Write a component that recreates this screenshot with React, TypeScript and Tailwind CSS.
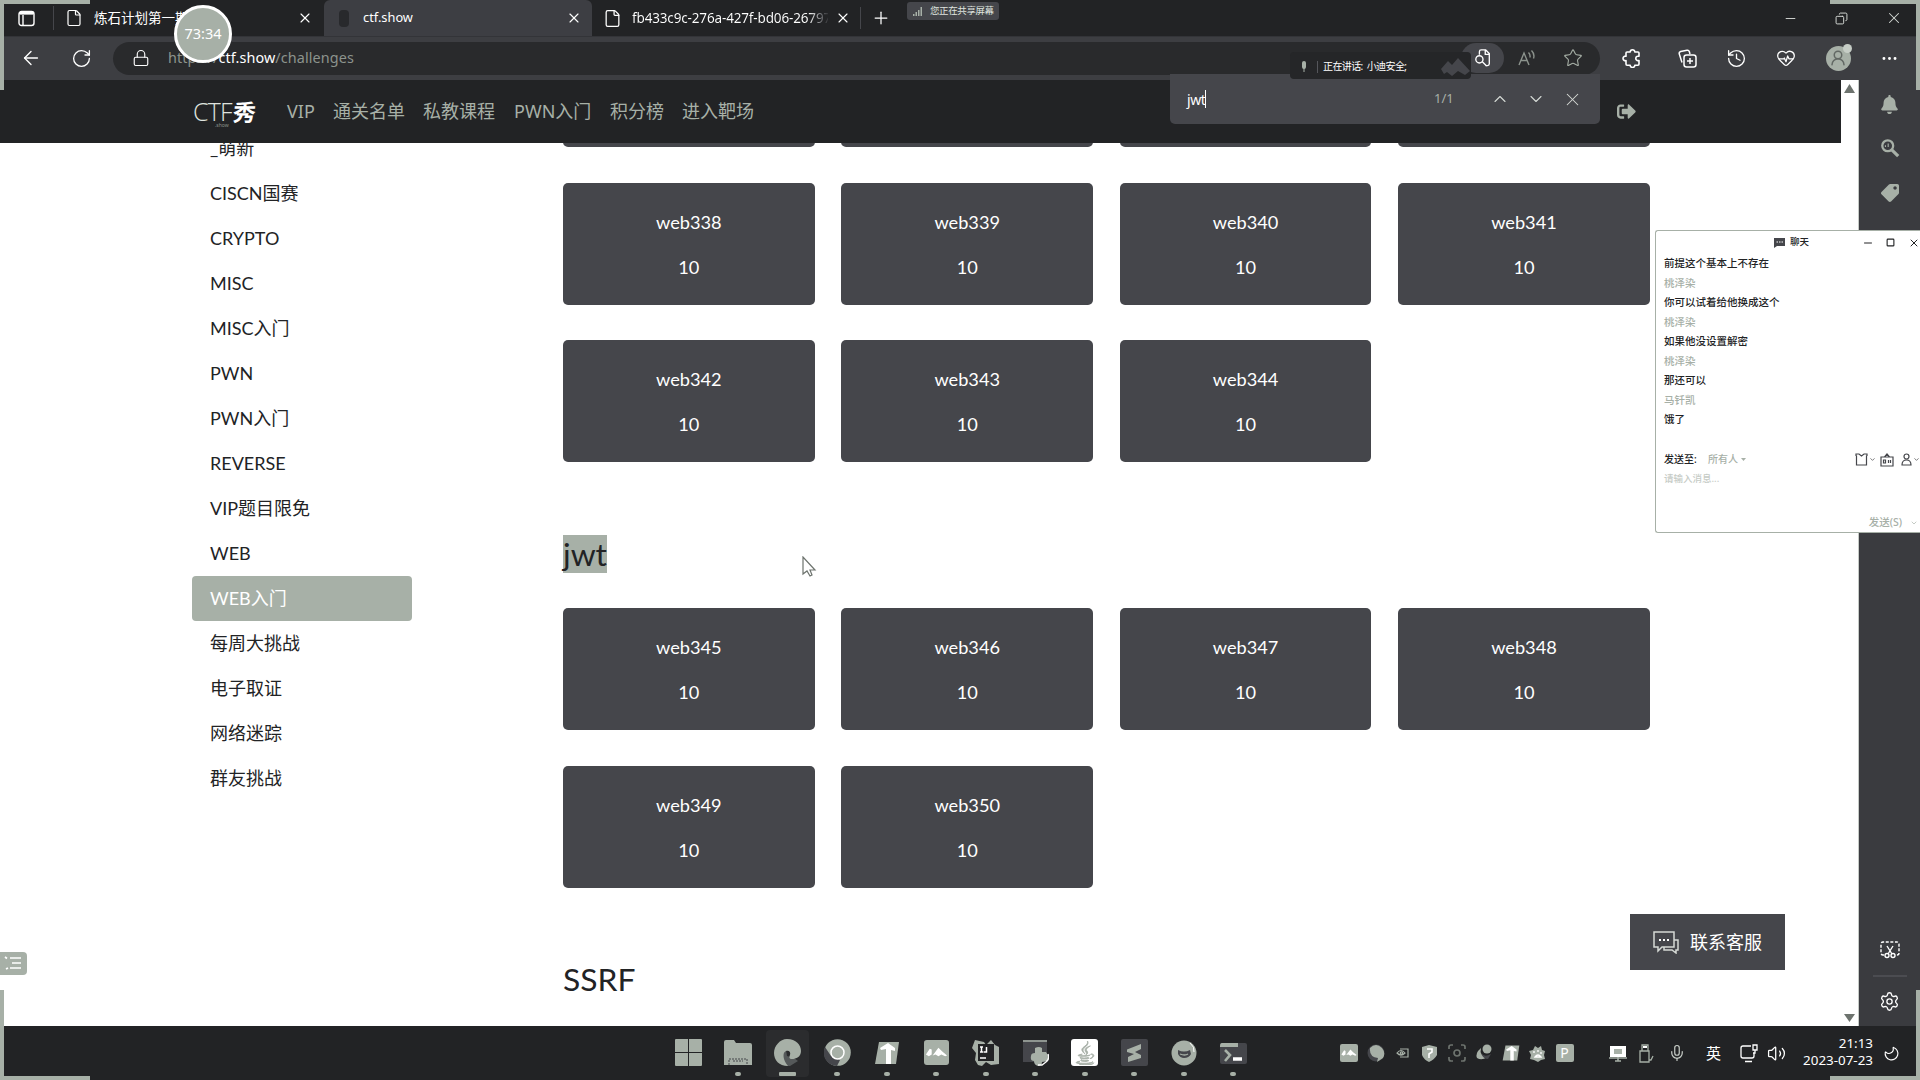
import React from "react";
import type { ReactNode } from "react";
import {
  ArrowLeft, RotateCw, Lock, X, Plus, Minus, Square, Star, History, Ellipsis, ChevronUp, ChevronDown,
  Mic, Volume2, Moon, Settings, File, Copy, UserRound, HeartPulse,
} from "lucide-react";
import { FaBell, FaSignOutAlt, FaTag, FaJava } from "react-icons/fa";

const categories = [
  "_萌新", "CISCN国赛", "CRYPTO", "MISC", "MISC入门", "PWN", "PWN入门", "REVERSE",
  "VIP题目限免", "WEB", "WEB入门", "每周大挑战", "电子取证", "网络迷踪", "群友挑战",
];
const navLinks = [
  { label: "VIP", width: "w-[46px]" },
  { label: "通关名单", width: "w-[90px]" },
  { label: "私教课程", width: "w-[91px]" },
  { label: "PWN入门", width: "w-[96px]" },
  { label: "积分榜", width: "w-[72px]" },
  { label: "进入靶场", width: "w-[90px]" },
];
const messages = [
  { text: "前提这个基本上不存在", name: false },
  { text: "桃泽染", name: true },
  { text: "你可以试着给他换成这个", name: false },
  { text: "桃泽染", name: true },
  { text: "如果他没设置解密", name: false },
  { text: "桃泽染", name: true },
  { text: "那还可以", name: false },
  { text: "马钎凯", name: true },
  { text: "饿了", name: false },
];

function Cell({ w, children }: { w: string; children?: ReactNode }) {
  return <div className={`flex shrink-0 items-center justify-center ${w}`}>{children}</div>;
}

function Card({ name }: { name: string }) {
  return (
    <div className="flex h-[122px] flex-col items-center rounded-[5px] bg-[#45464b] pt-[25px] text-[18.2px] text-white">
      <p className="leading-[28px]">{name}</p>
      <p className="mt-[17px] leading-[28px]">10</p>
    </div>
  );
}

function Grid({ items }: { items: string[] }) {
  return (
    <div className="grid grid-cols-[251.700px_251.700px_251.700px_251.700px] gap-x-[26.700px] gap-y-[35.700px]">
      {items.map((n) => <Card key={n} name={n} />)}
    </div>
  );
}

function TabBar() {
  return (
    <div className="flex h-[36px] shrink-0 items-center bg-[#222325] text-[13.5px] text-white">
      <Cell w="w-[53px]">
        <svg width="17" height="17" viewBox="0 0 17 17" fill="none" stroke="#fff" strokeWidth="1.4">
          <rect x="1" y="1.5" width="15" height="14" rx="2.5" />
          <path d="M1 3.5h15M5 5v10" /><path d="M2 3h13" strokeWidth="3" />
        </svg>
      </Cell>
      <div className="h-[24px] w-px bg-[#45464b]" />
      <Cell w="w-[40px]"><File size={18} strokeWidth={1.6} /></Cell>
      <span className="w-[192px] overflow-hidden whitespace-nowrap">炼石计划第一期</span>
      <Cell w="w-[38px]"><X size={16} strokeWidth={1.7} /></Cell>
      <div className="flex h-full w-[268px] items-center rounded-t-[6px] bg-[#3d3e43]">
        <Cell w="w-[39px]"><span className="h-[17px] w-[10px] rounded-[4px] bg-[#28292c]" /></Cell>
        <span className="w-[192px] text-[12.800px]">ctf.show</span>
        <Cell w="w-[37px]"><X size={16} strokeWidth={1.7} /></Cell>
      </div>
      <Cell w="w-[40px]"><File size={19} strokeWidth={1.6} /></Cell>
      <span className="w-[196px] overflow-hidden bg-linear-to-r from-white from-90% to-[#333438] to-100% bg-clip-text whitespace-nowrap text-transparent tracking-[-0.15px]">fb433c9c-276a-427f-bd06-26797</span>
      <Cell w="w-[30px]"><X size={16} strokeWidth={1.7} /></Cell>
      <div className="mr-[1px] ml-[2px] h-[22px] w-px bg-[#45464b]" />
      <Cell w="w-[37px]"><Plus size={20} strokeWidth={1.5} /></Cell>
      <div className="mr-[-1px] ml-auto flex text-[#d5d9d5]">
        <Cell w="w-[51px]"><Minus size={15} strokeWidth={1.5} /></Cell>
        <Cell w="w-[51px]"><Copy size={13} strokeWidth={1.8} className="-scale-x-100" /></Cell>
        <Cell w="w-[54px]"><X size={18} strokeWidth={1.4} /></Cell>
      </div>
    </div>
  );
}

function Toolbar() {
  return (
    <div className="flex h-[44px] shrink-0 items-center border-t border-[#333438] bg-[#3d3e42] pb-[1px] text-white">
      <Cell w="w-[62px]"><ArrowLeft size={22} strokeWidth={1.5} /></Cell>
      <Cell w="w-[38px]"><RotateCw size={21} strokeWidth={1.5} /></Cell>
      <div className="ml-[13px] flex h-[33px] w-[1487px] items-center rounded-full bg-[#292a2c]">
        <Cell w="w-[55px]"><Lock size={18} strokeWidth={1.5} /></Cell>
        <span className="text-[14.4px] tracking-[0.1px] text-[#8c938d]">https://<span className="text-white">ctf.show</span>/challenges</span>
        <div className="mr-[3px] ml-auto flex items-center">
          <div className="flex h-[30px] w-[43px] items-center justify-center rounded-full bg-[#45464b]">
            <svg width="18" height="20" viewBox="0 0 20 21" fill="none" stroke="#fff" strokeWidth="1.5">
              <path d="M6 7V3.500a2 2 0 0 1 2-2h5l4 4V17a2 2 0 0 1-2 2h-2M12.500 2v4.500H17" /><circle cx="6" cy="12" r="4" /><path d="m9 14.500 5 5" />
            </svg>
          </div>
          <Cell w="w-[46px]">
            <svg width="20" height="18" viewBox="0 0 20 18" fill="none" stroke="#8c938d" strokeWidth="1.4">
              <path d="m2 16 5-12 5 12M4 11.500h6M11.500 3.500q2 2 1.500 5M14.500 1.500q3.500 3.500 2 8" />
            </svg>
          </Cell>
          <Cell w="w-[45px]"><Star size={20} strokeWidth={1.3} className="text-[#a7b0a7]" /></Cell>
          <div className="w-[2px]" />
        </div>
      </div>
      <Cell w="w-[62px]">
        <svg width="19" height="20" viewBox="0 0 19 20" fill="none" stroke="#fff" strokeWidth="1.6" strokeLinejoin="round">
          <path d="M5 4h3.200a2.300 2.300 0 1 1 4.600 0H16q1 0 1 1v3.200h-1a2 2 0 1 0 0 4.400h1V16q0 1.200-1 1.200h-3.200a2.300 2.300 0 1 1-4.600 0H5q-1 0-1-1.200v-3.400a2.300 2.300 0 1 1 0-4.400V5q0-1 1-1z" />
        </svg>
      </Cell>
      <Cell w="w-[50px]">
        <svg width="19" height="19" viewBox="0 0 19 19" fill="none" stroke="#fff" strokeWidth="1.5">
          <path d="M4 13.500 1.300 5a2 2 0 0 1 1.300-2.500L9 1.200a2 2 0 0 1 2.300 1.300L12 5" /><rect x="6" y="6" width="12" height="12" rx="2.500" /><path d="M12 9v6M9 12h6" />
        </svg>
      </Cell>
      <Cell w="w-[48px]"><History size={21} strokeWidth={1.5} /></Cell>
      <Cell w="w-[51px]"><HeartPulse size={20} strokeWidth={1.5} /></Cell>
      <Cell w="w-[54px]">
        <span className="relative flex size-[25px] items-center justify-center rounded-full bg-[#a7b0a7]">
          <UserRound size={18} strokeWidth={2} className="text-[#626864]" />
          <span className="absolute -top-[2px] -right-[1px] size-[9px] rounded-full bg-[#c6cdc6]" />
        </span>
      </Cell>
      <Cell w="w-[48px]"><Ellipsis size={19} strokeWidth={1.7} /></Cell>
    </div>
  );
}

function Navbar() {
  return (
    <nav className="flex h-[63px] w-[1841px] shrink-0 items-center bg-[#222325] pl-[193px] text-[18px] text-[#a7b0a7]">
      <div className="relative flex w-[94px] items-center text-white">
        <span className="font-['Open_Sans'] text-[25px] font-light tracking-[-0.8px] text-[#dfe3df]">CTF</span>
        <span className="-mt-[1px] ml-[1px] -skew-x-6 font-['Noto_Sans_CJK_SC'] text-[23px] leading-[30px] font-bold">秀</span>
        <span className="absolute top-[30px] left-[22px] text-[5px] leading-[5px] text-[#8c938d]">.show</span>
      </div>
      {navLinks.map((l) => <a key={l.label} className={`shrink-0 whitespace-nowrap ${l.width}`}>{l.label}</a>)}
      <FaSignOutAlt size={19} className="ml-[845px]" />
    </nav>
  );
}

function FindBar() {
  return (
    <div className="absolute top-[74px] left-[1170px] flex h-[50px] w-[430px] items-center rounded-b-[5px] bg-[#45464b] pl-[17px] text-[14px] text-white">
      <span className="flex w-[247px] items-center tracking-[-0.4px]">jwt<span className="h-[18px] w-px bg-white" /></span>
      <span className="w-[48px] text-[13px] text-[#a7b0a7]">1/1</span>
      <Cell w="w-[36px]"><ChevronUp size={20} strokeWidth={1.3} className="text-[#d5d9d5]" /></Cell>
      <Cell w="w-[36px]"><ChevronDown size={20} strokeWidth={1.3} className="text-[#d5d9d5]" /></Cell>
      <Cell w="w-[36px]"><X size={21} strokeWidth={1.2} className="text-[#d5d9d5]" /></Cell>
    </div>
  );
}

function SpeakingPopup() {
  return (
    <div className="absolute top-[52px] left-[1290px] flex h-[27px] w-[181px] items-center rounded-[4px] bg-[#252628] pt-[2px] text-[10px] text-white">
      <Cell w="w-[27px]"><svg width="6" height="11" viewBox="0 0 6 11"><rect x="1" width="4" height="8" rx="2" fill="#a7b0a7" /><path d="M3 7v4" stroke="#a7b0a7" /></svg></Cell>
      <div className="h-[12px] w-px bg-[#55565b]" />
      <span className="ml-[5px] whitespace-pre tracking-[-0.6px]">正在讲话:  小迪安全;</span>
      <svg className="mr-0 ml-auto" width="30" height="19" viewBox="0 0 30 19" fill="#45464b"><path d="m0 12 7-8 4 4 6-7 12 13-5 4-7-4-6 5-5-4-3 2z" /></svg>
    </div>
  );
}

function EdgeSidebar() {
  return (
    <aside className="flex w-[61px] shrink-0 flex-col items-center bg-[#3a3b3f] pt-[15px] text-[#a7b0a7]">
      <FaBell size={19} />
      <svg className="mt-[24px]" width="20" height="20" viewBox="0 0 22 22" fill="none" stroke="#a7b0a7" strokeWidth="2.500">
        <circle cx="8.500" cy="8.500" r="6" /><path d="m13 13 7 7" strokeWidth="3.500" /><path d="M6 10V8m3 2V6" strokeWidth="1.200" />
      </svg>
      <FaTag size={18} className="mt-[26px] rotate-90" />
      <svg className="mt-auto" width="20" height="18" viewBox="0 0 20 18" fill="none" stroke="#fff" strokeWidth="1.4">
        <path d="M4 14H3a2 2 0 0 1-2-2V3a2 2 0 0 1 2-2h14a2 2 0 0 1 2 2v9a2 2 0 0 1-2 2h-1" strokeDasharray="3 1.600" />
        <path d="m7 5 5 8M13 5l-5 8" /><circle cx="7" cy="14.500" r="2" /><circle cx="13" cy="14.500" r="2" />
      </svg>
      <div className="mt-[16px] h-[2px] w-[34px] bg-[#4b4c51]" />
      <Settings size={21} strokeWidth={1.5} className="mt-[14px] mb-[14px] text-white" />
    </aside>
  );
}

function ChatWindow() {
  return (
    <section className="absolute top-[230px] left-[1655px] flex h-[303px] w-[265px] flex-col overflow-hidden rounded-l-[3px] border border-r-0 border-[#a7b0a7] bg-white text-[10.5px] font-medium text-[#222325]">
      <header className="flex h-[23px] shrink-0 items-center">
        <div className="ml-[118px] flex w-[79px] items-center gap-[5px] text-[9.500px]">
          <svg width="11" height="10" viewBox="0 0 11 10"><path d="M0 0h11v8H3l-3 2z" fill="#45464b" /><path d="M2.500 4h1.500m1 0h1.500m1 0H9" stroke="#fff" /></svg>
          聊天
        </div>
        <Cell w="w-[32px]"><Minus size={12} /></Cell>
        <Cell w="w-[13px]"><Square size={9} strokeWidth={3} /></Cell>
        <div className="ml-[11px] flex"><X size={12} className="shrink-0" /></div>
      </header>
      <div className="flex flex-col pl-[8px]">
        {messages.map((m, i) => (
          <p key={i} className={`h-[19.5px] leading-[19.5px] whitespace-nowrap ${m.name ? "text-[#a7b0a7]" : ""}`}>{m.text}</p>
        ))}
      </div>
      <div className="mt-[20px] flex h-[20px] items-center pl-[8px] text-[10px]">
        <span className="w-[44px]">发送至:</span>
        <span className="flex items-center gap-[3px] text-[#a7b0a7]">所有人 <span className="h-[3px] w-[5px] bg-[#a7b0a7] [clip-path:polygon(0_0,100%_0,50%_100%)]" /></span>
        <div className="ml-auto flex items-center gap-px">
          <svg width="13" height="13" viewBox="0 0 13 13" fill="none" stroke="#45464b" strokeWidth="1.2"><path d="M1 3V1h3l2.500 2L9 1h3v2M1.500 2.500V12h10V2.500" /></svg>
          <ChevronDown size={7} />
          <svg className="ml-[3px]" width="14" height="14" viewBox="0 0 14 14" fill="none" stroke="#45464b" strokeWidth="1.2"><path d="M1 4h12v9H1zM4.500 4 7 1l2.500 3M3.500 7h2v3h-2zm5 0v3m2-3v3" /></svg>
          <svg className="ml-[6px]" width="11" height="13" viewBox="0 0 11 13" fill="none" stroke="#45464b" strokeWidth="1.2"><circle cx="5.500" cy="3.500" r="2.500" /><path d="M1 12q0-5 4.500-5T10 12z" /></svg>
          <ChevronDown size={7} />
        </div>
      </div>
      <p className="pl-[8px] text-[9.500px] leading-[17px] text-[#c6cbc6]">请输入消息...</p>
      <div className="mt-auto mb-[1px] flex items-center justify-end gap-[8px] pr-[2px] text-[10.500px] text-[#a7b0a7]">发送(S)<ChevronDown size={8} /></div>
    </section>
  );
}

const S = "#a7b0a7";

function MountainIcon({ size }: { size: number }) {
  return (
    <svg width={size} height={size} viewBox="0 0 26 26"><rect width="26" height="26" rx="3" fill={S} /><path d="m2 15 4-6 2 1v5l-3 2zm7 1 6-8 4 4 5 4-2 1-4-2-3 2-3-2z" fill="#fff" /></svg>
  );
}
function TyporaIcon({ size }: { size: number }) {
  return (
    <svg width={size} height={size} viewBox="0 0 26 26"><path d="M5 2h20l-3 22H1z" fill={S} /><path d="M14 3 6 8l1 2 5-1v15h5V10l4 1V8z" fill="#fff" /></svg>
  );
}

function TaskIcon({ children, active = false, running = true }: { children: ReactNode; active?: boolean; running?: boolean }) {
  return (
    <div className={`flex h-[47px] w-[43px] flex-col items-center rounded-[4px] pt-[9px] ${active ? "bg-[#2b2c2e]" : ""}`}>
      <div className="flex h-[28px] items-center">{children}</div>
      {running && <span className={`mt-[5px] bg-[#a7b0a7] ${active ? "h-[4px] w-[17px] rounded-[1px]" : "h-[4px] w-[6px] rounded-full"}`} />}
    </div>
  );
}

function Taskbar() {
  return (
    <footer className="flex h-[54px] shrink-0 items-center bg-[#222325]">
      <div className="ml-[667px] flex w-[680px] shrink-0 gap-[6.500px]">
        <TaskIcon running={false}><svg width="27" height="27" viewBox="0 0 27 27" fill={S}><path d="M0 1q0-1 1-1h12v13H0zM14 0h12q1 0 1 1v12H14zM0 14h13v13H1q-1 0-1-1zM14 14h13v12q0 1-1 1H14z" /></svg></TaskIcon>
        <TaskIcon><svg width="28" height="26" viewBox="0 0 28 26"><path d="M0 2q0-2 2-2h8l2 3h14q2 0 2 2v20H0z" fill={S} /><path d="M5 25v-6h18v6M9 21h10" fill="none" stroke="#45464b" strokeDasharray="2 1" /></svg></TaskIcon>
        <TaskIcon active><svg width="27" height="28" viewBox="0 0 27 28"><path d="M8 17q0 6 5 10h3l8-5-4-3-7-2-1-6z" fill="#55595a" /><path d="M13 0C22 0 27 6 27 12c0 6-5 8-9 8-3 0-3-2-2-4 1-3-1-5-4-4-4 2-3 9 2 15C5 27 0 21 0 14S6 0 13 0z" fill={S} /></svg></TaskIcon>
        <TaskIcon><svg width="27" height="27" viewBox="0 0 27 27"><circle cx="13.500" cy="13.500" r="13.300" fill={S} /><path d="M1 8a13.300 13.300 0 0 0 12 19l3-6-9-4z" fill="#45464b" /><circle cx="13.500" cy="13.500" r="6.500" fill={S} stroke="#fff" strokeWidth="1.500" /></svg></TaskIcon>
        <TaskIcon><TyporaIcon size={26} /></TaskIcon>
        <TaskIcon><MountainIcon size={25} /></TaskIcon>
        <TaskIcon><svg width="27" height="27" viewBox="0 0 27 27"><path d="m3 1 9 2 2 3 5-5 4 5 4 2v17l-8 1-5-3-4 4-4-1-3-5 1-7-4-5z" fill={S} /><path d="M6 5h16v17H6z" fill="#222325" /><path d="M8 8h3M9.500 8v5M8 13h3M14.500 8v5h-3M8 19h6" stroke="#fff" strokeWidth="1.500" fill="none" /></svg></TaskIcon>
        <TaskIcon><svg width="27" height="27" viewBox="0 0 27 27"><path d="M1 1h24v22H1z" fill="#45464b" /><path d="M1 2h24" stroke={S} strokeWidth="1.500" /><path d="M13 9q4-2 7 0v4h4q4 5 1 9l-5 1q0 4-4 4-4-1-4-5-4 0-3-5 0-3 4-3z" fill={S} /><path d="M26 15q2 5-2 8l-4 3h-4" fill="none" stroke="#fff" strokeWidth="1.300" /></svg></TaskIcon>
        <TaskIcon><span className="flex size-[27px] items-center justify-center rounded-[3px] bg-white"><FaJava size={24} color={S} stroke={S} strokeWidth={18} /></span></TaskIcon>
        <TaskIcon><svg width="27" height="27" viewBox="0 0 27 27"><rect width="27" height="27" rx="2" fill="#45464b" /><path d="M6 10.500 20 5v5l-6 3 6 3v3L7 23v-5l6-3-7-2z" fill={S} /></svg></TaskIcon>
        <TaskIcon><svg width="26" height="26" viewBox="0 0 26 26"><circle cx="13" cy="13" r="12.500" fill={S} /><path d="M7 10q6 3 12 0l1 4q-2 4-7 4-4 0-6-4z" fill="#45464b" /><path d="M9 14q5 2 8 0M19 4q5 4 4 9" stroke={S} fill="none" strokeWidth="1.300" /><path d="M19 3q5 4 4 9" stroke="#fff" fill="none" /></svg></TaskIcon>
        <TaskIcon><svg width="27" height="24" viewBox="0 0 27 24"><rect y="2" width="27" height="21" rx="2" fill="#45464b" /><path d="M0 5q0-3 2-3h16v4H0z" fill={S} /><path d="m5 9 5 5-5 6" stroke={S} strokeWidth="2.600" fill="none" /><path d="M13 18h9" stroke="#fff" strokeWidth="3.500" /></svg></TaskIcon>
      </div>
      <div className="-ml-[12px] flex items-center">
        <Cell w="w-[27px]"><MountainIcon size={18} /></Cell>
        <Cell w="w-[27px]"><svg width="18" height="18" viewBox="0 0 18 18"><circle cx="9" cy="9" r="8.500" fill="#45464b" /><path d="M3 4q6-6 12 0 4 5 1 10l-6 4 1-4Q2 13 3 4z" fill={S} /></svg></Cell>
        <Cell w="w-[27px]"><svg width="13" height="10" viewBox="0 0 13 10" fill="none" stroke={S} strokeWidth="1.200"><path d="M4 1h8v8H4M1 5q4-5 8 0-4 4-8 0z" /><circle cx="5.500" cy="5" r="1.200" /></svg></Cell>
        <Cell w="w-[27px]"><svg width="17" height="18" viewBox="0 0 17 18"><path d="m1 3 7-2 8 2v8q-3 5-8 7-5-2-7-7z" fill={S} /><path d="M6 5h5v3l-3 2v2m-1 1h2" fill="none" stroke="#fff" strokeWidth="1.600" /></svg></Cell>
        <Cell w="w-[27px]"><svg width="18" height="18" viewBox="0 0 18 18" fill="none" stroke="#6d736e" strokeWidth="1.700"><path d="M1 5V3q0-2 2-2h2M13 1h2q2 0 2 2v2M17 13v2q0 2-2 2h-2M5 17H3q-2 0-2-2v-2" /><circle cx="9" cy="9" r="3" /></svg></Cell>
        <Cell w="w-[27px]"><svg width="18" height="18" viewBox="0 0 18 18"><circle cx="12" cy="5" r="4.500" fill={S} /><path d="M6 4q-6 5-4 10 5 3 10-1-8-1-6-9z" fill={S} /><path d="M6 9q3 5 10 1l-3 5q-5 0-7-6z" fill="#45464b" /></svg></Cell>
        <Cell w="w-[27px]"><TyporaIcon size={18} /></Cell>
        <Cell w="w-[27px]"><svg width="17" height="17" viewBox="0 0 17 17"><path d="m6 1 3 2 3-2 1 4 3 1-1 4 1 4-4 1-3 2-4-2-4-1 1-4-2-4 4-1z" fill={S} /><path d="M5 6v2M9 5v2M12 7v2M6 12q3-4 6 0z" stroke="#fff" strokeWidth="1.300" fill="none" /></svg></Cell>
        <Cell w="w-[27px]"><span className="flex size-[18px] items-center justify-center rounded-[2px] bg-[#a7b0a7] text-[14px] leading-none text-white">P</span></Cell>
      </div>
      <div className="ml-[25px] flex items-center text-white">
        <Cell w="w-[29px]"><svg width="18" height="17" viewBox="0 0 18 17"><path d="M1 1h16v11H1z" fill="#fff" /><path d="M5 4h8v5H5z" fill={S} /><path d="M0 13h18M9 12v4M6 16h6" stroke={S} strokeWidth="1.600" /></svg></Cell>
        <Cell w="w-[29px]"><svg width="15" height="19" viewBox="0 0 15 19" fill="none" stroke={S} strokeWidth="1.300"><path d="M1 7h9v11H1zM3 7V1h6v6M10 16h2l2-4" /><path d="M4 3h4" stroke="#fff" strokeWidth="2" /></svg></Cell>
        <Cell w="w-[31px]"><Mic size={18} strokeWidth={1.6} className="text-[#c8cec8]" /></Cell>
        <Cell w="w-[43px]"><span className="text-[15px]">英</span></Cell>
        <Cell w="w-[28px]"><svg width="18" height="19" viewBox="0 0 18 19" fill="none" stroke="#fff" strokeWidth="1.300"><path d="M11 2H3a2 2 0 0 0-2 2v8a2 2 0 0 0 2 2h9a2 2 0 0 0 2-2V9M5 17.500h7M13 1h4v5h-4zM15 6v3h-2" /></svg></Cell>
        <Cell w="w-[26px]"><Volume2 size={19} strokeWidth={1.6} /></Cell>
      </div>
      <div className="w-[84px] pb-[2px] text-right text-[13.4px] leading-[17px] whitespace-nowrap text-white">
        <p>21:13</p>
        <p>2023-07-23</p>
      </div>
      <Cell w="w-[36px]"><Moon size={17} strokeWidth={1.6} className="-rotate-[75deg] text-white" /></Cell>
    </footer>
  );
}

export default function App() {
  return (
    <div className="relative flex h-[1080px] w-[1920px] flex-col overflow-hidden bg-white font-['Noto_Sans','Noto_Sans_CJK_SC',sans-serif]">
      <TabBar />
      <Toolbar />
      <div className="flex min-h-0 flex-1">
        <div className="flex w-[1841px] shrink-0 flex-col overflow-hidden bg-white">
          <Navbar />
          <main className="flex min-h-0 flex-1 overflow-hidden font-['Lato','Noto_Sans_CJK_SC',sans-serif] text-[#222325]">
            <ul className="mt-[-17px] ml-[192px] w-[220px] shrink-0 text-[18px]">
              {categories.map((c) => (
                <li key={c} className={`h-[45px] rounded-[4px] pl-[18px] leading-[45px] ${c === "WEB入门" ? "bg-[#a7b0a7] text-white" : ""}`}>{c}</li>
              ))}
            </ul>
            <div className="mt-[-118px] ml-[151px] shrink-0">
              <Grid items={["web334", "web335", "web336", "web337", "web338", "web339", "web340", "web341", "web342", "web343", "web344"]} />
              <h3 className="mt-[73px] h-[38px] text-[31.800px] leading-[38px]"><span className="bg-[#a7b0a7]">jwt</span></h3>
              <div className="mt-[35px]"><Grid items={["web345", "web346", "web347", "web348", "web349", "web350"]} /></div>
              <h3 className="mt-[72px] h-[38px] text-[31.800px] leading-[38px]">SSRF</h3>
            </div>
          </main>
        </div>
        <div className="flex w-[18px] shrink-0 flex-col items-center justify-between border-r border-[#c6cbc6] bg-white py-[4px]">
          <span className="h-[9px] w-[11px] bg-[#6d736e] [clip-path:polygon(50%_0,100%_100%,0_100%)]" />
          <span className="h-[8px] w-[11px] bg-[#6d736e] [clip-path:polygon(0_0,100%_0,50%_100%)]" />
        </div>
        <EdgeSidebar />
      </div>
      <Taskbar />

      <FindBar />
      <SpeakingPopup />
      <div className="absolute top-[2px] left-[907px] flex h-[18px] w-[92px] items-center rounded-[3px] bg-[#45464b] pl-[6px] text-[9.500px] whitespace-nowrap text-[#dfe3df]">
        <svg width="9" height="9" viewBox="0 0 9 9" fill="#a7b0a7"><path d="M0 7h1.500v2H0zM2.500 5H4v4H2.500zM5 3h1.500v6H5zM7.500 0H9v9H7.500z" /></svg>
        <span className="ml-[8px] tracking-[-0.4px]">您正在共享屏幕</span>
      </div>
      <div className="absolute top-[5px] left-[174px] flex size-[58px] items-center justify-center rounded-full border-[3px] border-white bg-[#a7b0a7] text-[14.500px] text-white">73:34</div>
      <ChatWindow />
      <div className="absolute top-[914px] left-[1630px] flex h-[56px] w-[155px] items-center bg-[#45464b] pt-[1px] pl-[23px] text-[18px] text-white">
        <svg width="26" height="23" viewBox="0 0 26 23" fill="none" stroke="#d5d9d5" strokeWidth="1.500"><path d="M1 1h20v15H9l-4 4v-4H1zM21 9h4v10h-2v3l-4-3h-8v-3" /><path d="M6 9h2M10 9h2M14 9h2" stroke="#fff" strokeWidth="2" /></svg>
        <span className="ml-[11px]">联系客服</span>
      </div>
      <div className="absolute top-[952px] left-0 flex h-[23px] w-[27px] items-center justify-center rounded-r-[4px] bg-[#a7b0a7] pr-[2px] pb-[2px]">
        <svg width="18" height="14" viewBox="0 0 18 14" fill="none" stroke="#fff" strokeWidth="1.700"><path d="M6 2h11M8 7h9M6 12h11M1 1l2 1.500M2 13l2-1" /></svg>
      </div>
      <svg className="absolute top-[556px] left-[801px]" width="16" height="22" viewBox="0 0 16 22"><path d="M2 1v17l4-3 3 5 2-1-2-5h5z" fill="#fff" stroke="#6d736e" strokeWidth="1.200" /></svg>

      <div className="absolute top-0 left-0 size-[90px] border-t-4 border-l-4 border-[#a7b0a7]" />
      <div className="absolute top-0 right-0 size-[90px] border-t-4 border-r-4 border-[#a7b0a7]" />
      <div className="absolute bottom-0 left-0 size-[90px] border-b-4 border-l-4 border-[#a7b0a7]" />
      <div className="absolute right-0 bottom-0 size-[90px] border-r-4 border-b-4 border-[#a7b0a7]" />
    </div>
  );
}
